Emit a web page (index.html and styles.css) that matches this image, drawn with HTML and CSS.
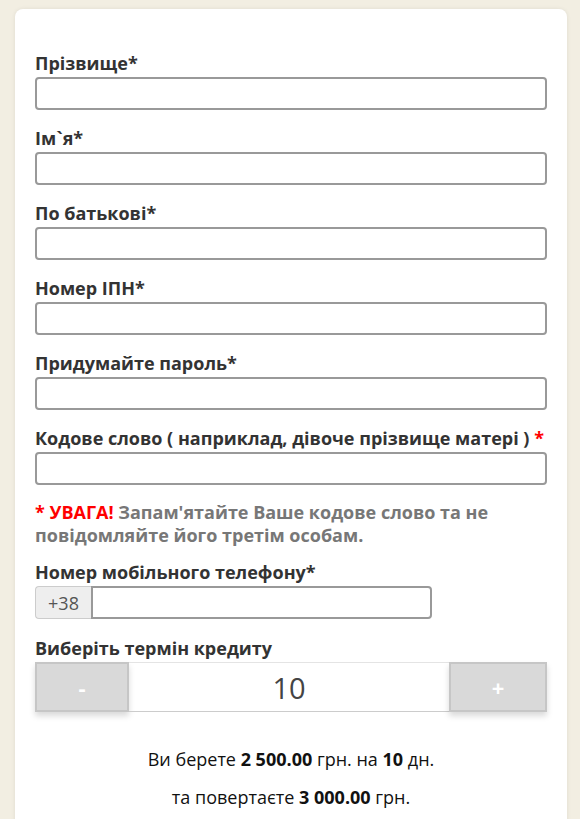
FILE: index.html
```html
<!DOCTYPE html>
<html lang="uk">
<head>
<meta charset="utf-8">
<link rel="stylesheet" href="styles.css">
</head>
<body>
<div class="card">
  <div class="field">
    <label class="lbl">Прізвище*</label>
    <input class="inp" type="text">
  </div>
  <div class="field">
    <label class="lbl">Ім`я*</label>
    <input class="inp" type="text">
  </div>
  <div class="field">
    <label class="lbl">По батькові*</label>
    <input class="inp" type="text">
  </div>
  <div class="field">
    <label class="lbl">Номер ІПН*</label>
    <input class="inp" type="text">
  </div>
  <div class="field">
    <label class="lbl">Придумайте пароль*</label>
    <input class="inp" type="password">
  </div>
  <div class="field">
    <label class="lbl">Кодове слово ( наприклад, дівоче прізвище матері ) <span class="red">*</span></label>
    <input class="inp" type="text">
  </div>
  <p class="warn"><span class="red">* УВАГА!</span> Запам'ятайте Ваше кодове слово та не повідомляйте його третім особам.</p>
  <div class="field field-phone">
    <label class="lbl">Номер мобільного телефону*</label>
    <div class="phone">
      <span class="addon">+38</span>
      <input class="pinp" type="text">
    </div>
  </div>
  <div class="field field-term">
    <label class="lbl">Виберіть термін кредиту</label>
    <div class="stepper">
      <button class="sbtn">-</button>
      <div class="sval">10</div>
      <button class="sbtn">+</button>
    </div>
  </div>
  <p class="sum">Ви берете <b>2 500.00</b> грн. на <b>10</b> дн.</p>
  <p class="sum">та повертаєте <b>3 000.00</b> грн.</p>
</div>
</body>
</html>
```

FILE: styles.css
```css
html, body {
  margin: 0;
  padding: 0;
  background: #f2eee2;
  font-family: "Open Sans", "Noto Sans", sans-serif;
}
.card {
  margin: 9px 13px 0 15px;
  background: #fff;
  border-radius: 8px;
  box-shadow: 0 0 4px rgba(0,0,0,0.08);
  padding: 42px 20px 10px 20px;
  min-height: 820px;
  box-sizing: border-box;
}
.field {
  display: flex;
  flex-direction: column;
  margin-bottom: 16px;
}
.lbl {
  font-size: 18px;
  font-weight: 700;
  color: #333;
  line-height: 24px;
  margin-bottom: 2px;
}
.red { color: #f00; }
.inp {
  height: 33px;
  box-sizing: border-box;
  border: 2px solid #999;
  border-radius: 4px;
  margin: 0;
  padding: 0 8px;
  font-size: 16px;
  background: #fff;
}
.warn {
  margin: 1px 0 13px 0;
  font-size: 18px;
  font-weight: 700;
  line-height: 23px;
  color: #777;
}
.field-phone { margin-bottom: 17px; }
.phone {
  display: flex;
  width: 397px;
  height: 33px;
}
.addon {
  width: 56px;
  box-sizing: border-box;
  display: flex;
  align-items: center;
  justify-content: center;
  background: #eee;
  border: 1px solid #ccc;
  border-right: none;
  border-radius: 4px 0 0 4px;
  color: #555;
  font-size: 18px;
}
.pinp {
  flex: 1;
  box-sizing: border-box;
  border: 2px solid #999;
  border-radius: 0 4px 4px 0;
  margin: 0;
  padding: 0 8px;
  font-size: 16px;
}
.stepper {
  display: grid;
  grid-template-columns: 94px 1fr 98px;
  height: 50px;
}
.sbtn {
  background: #d9d9d9;
  border: 2px solid #c6c6c6;
  color: #fff;
  font-family: "Open Sans", sans-serif;
  font-size: 22px;
  font-weight: 700;
  box-shadow: 0 4px 6px rgba(0,0,0,0.15);
  margin: 0;
  padding: 0;
}
.sval {
  display: flex;
  align-items: center;
  justify-content: center;
  font-size: 29px;
  color: #444;
  border-bottom: 1px solid #ccc;
  border-top: 1px solid #e4e4e4;
}
.field-term { margin-bottom: 28px; }
.sum {
  text-align: center;
  font-size: 18px;
  color: #111;
  margin: 0;
  line-height: 38px;
}
.sum b { font-weight: 700; }
```
